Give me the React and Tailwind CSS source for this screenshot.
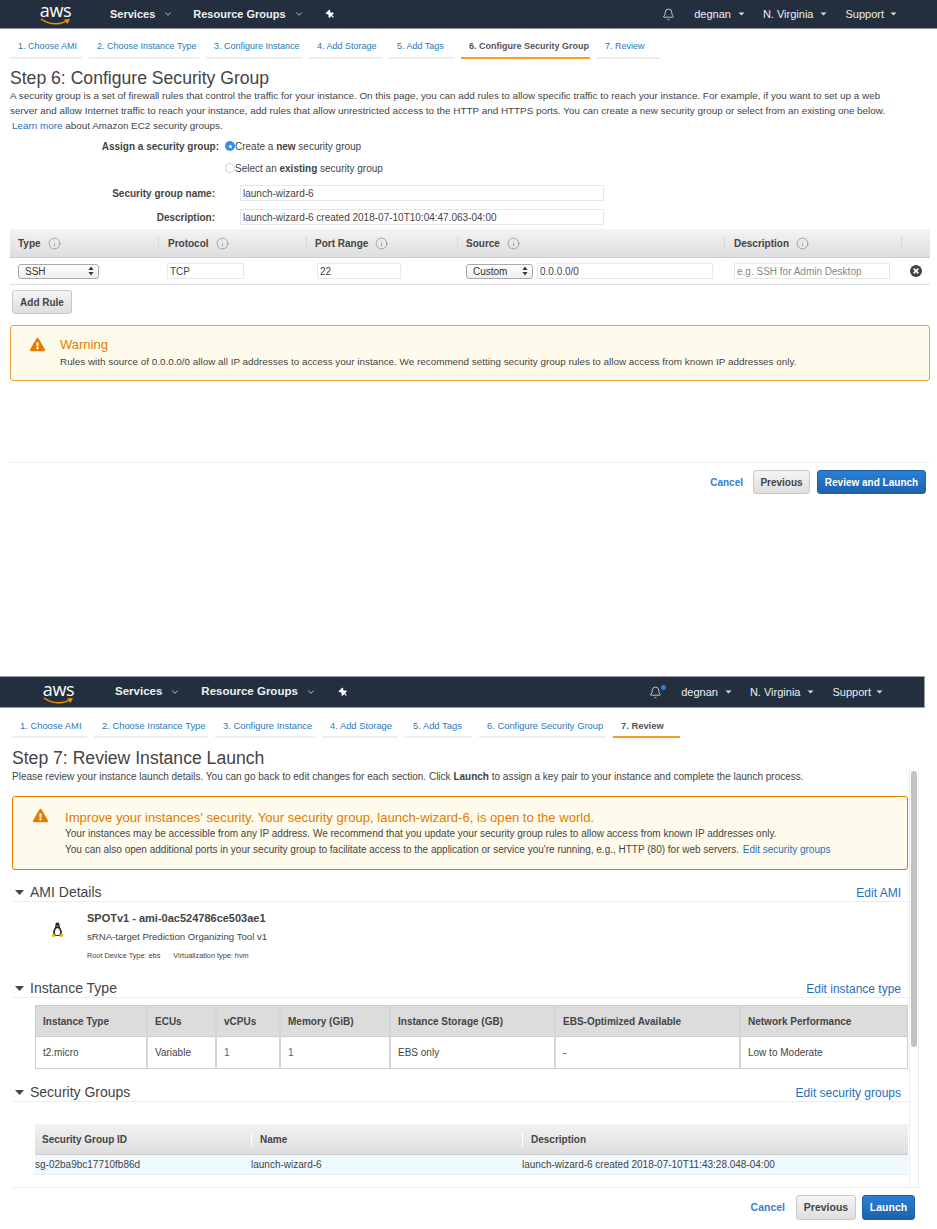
import { Bell, ChevronDown, Info } from 'lucide-react'
import { FaThumbtack, FaExclamationTriangle } from 'react-icons/fa'

function AwsLogo() {
  return (
    <div className="flex flex-col items-center w-[31px] h-[24px] shrink-0">
      <div className="text-white text-[18px] leading-[16px] font-['Open_Sans',sans-serif] tracking-[-0.3px]">aws</div>
      <svg width="31" height="8" viewBox="0 0 31 8">
        <path d="M1 1 C 9 7 21 7 27 2.5" fill="none" stroke="#f29100" strokeWidth="1.5" />
        <path d="M24 1.5 L30 1 L27.5 6 Z" fill="#f29100" />
      </svg>
    </div>
  )
}

function Caret() {
  return (
    <svg width="7" height="4" viewBox="0 0 7 4" className="shrink-0">
      <path d="M0.5 0.5 L3.5 3.5 L6.5 0.5 Z" fill="#d5dbdb" />
    </svg>
  )
}

function TopBar({ wide }) {
  return (
    <div className={wide
      ? "flex items-center h-[32px] w-[925px] bg-[#232f3e] border-y border-r border-[#9a9fa5] text-[#eceff1] text-[11px]"
      : "flex items-center h-[29px] w-[937px] bg-[#232f3e] border-b border-[#8a8f96] text-[#eceff1] text-[11px]"}>
      <div className={wide ? "ml-[43px] mt-[1px]" : "ml-[40px]"}><AwsLogo /></div>
      <span className={wide ? "ml-[41px] font-bold text-[11.5px]" : "ml-[39px] font-bold"}>Services</span>
      <ChevronDown size={10} className="ml-[8px] text-[#d5dbdb]" />
      <span className={wide ? "ml-[21px] font-bold text-[11.5px]" : "ml-[20px] font-bold"}>Resource Groups</span>
      <ChevronDown size={10} className="ml-[8px] text-[#d5dbdb]" />
      <FaThumbtack size={9} className={wide ? "ml-[23px] -rotate-45 text-white" : "ml-[22px] -rotate-45 text-white"} />
      <div className="flex-1" />
      <div className="relative">
        <Bell size={13} strokeWidth={1.3} className="text-white" />
        {wide && <div className="absolute -top-[1px] -right-[4px] w-[5px] h-[5px] rounded-full bg-[#2f7fdc]" />}
      </div>
      <span className={wide ? "ml-[19px]" : "ml-[19px]"}>degnan</span>
      <div className="ml-[7px]"><Caret /></div>
      <span className={wide ? "ml-[18px]" : "ml-[18px]"}>N. Virginia</span>
      <div className="ml-[7px]"><Caret /></div>
      <span className={wide ? "ml-[18px]" : "ml-[18px]"}>Support</span>
      <div className={wide ? "ml-[5px] mr-[41px]" : "ml-[6px] mr-[40px]"}><Caret /></div>
    </div>
  )
}

function Tabs({ items, big }) {
  return (
    <div className={big ? "flex gap-[7px] ml-[12px] mt-[8px] text-[9.4px]" : "flex gap-[7px] ml-[10px] mt-[8px] text-[9px]"}>
      {items.map((t) => (
        <div key={t.label} className={`${t.w} h-[22px] pl-[8px] flex items-center border-b-2 whitespace-nowrap ${t.active ? "border-[#f59b26] font-bold text-[#555]" : "border-[#eee] text-[#2a7ab8]"}`}>
          {t.label}
        </div>
      ))}
    </div>
  )
}

function HeadCell({ label, className }) {
  return (
    <div className={`flex items-center gap-[7px] h-[15px] font-bold text-[#444] ${className}`}>
      {label}
      <Info size={13} strokeWidth={1} className="text-[#666]" />
    </div>
  )
}

function FakeSelect({ label, className }) {
  return (
    <div className={`flex items-center justify-between h-[15px] pl-[6px] pr-[4px] border border-[#aaa] rounded-[3px] bg-gradient-to-b from-[#fff] to-[#eee] text-[#333] ${className}`}>
      {label}
      <svg width="6" height="10" viewBox="0 0 6 10">
        <path d="M3 0.5 L5.5 4 L0.5 4 Z M3 9.5 L5.5 6 L0.5 6 Z" fill="#333" />
      </svg>
    </div>
  )
}

function Field({ value, className }) {
  return <div className={`flex items-center h-[16px] px-[2px] border border-[#e8e8e8] text-[#444] whitespace-nowrap ${className}`}>{value}</div>
}

function Radio({ on }) {
  if (on) {
    return (
      <div className="flex items-center justify-center w-[10px] h-[10px] rounded-full bg-[#3b8ee8]">
        <div className="w-[3px] h-[3px] rounded-full bg-white" />
      </div>
    )
  }
  return <div className="w-[10px] h-[10px] rounded-full border border-[#ccc] bg-white" />
}

function Button({ label, primary, className }) {
  return (
    <div className={`flex items-center justify-center font-bold rounded-[3px] border ${primary
      ? "bg-gradient-to-b from-[#2b7fd4] to-[#1b62ae] border-[#1b62ae] text-white"
      : "bg-gradient-to-b from-[#f5f5f5] to-[#dedede] border-[#c8c8c8] text-[#444]"} ${className}`}>
      {label}
    </div>
  )
}

function CloseIcon() {
  return (
    <svg width="12" height="12" viewBox="0 0 12 12">
      <circle cx="6" cy="6" r="6" fill="#444" />
      <path d="M3.7 3.7 L8.3 8.3 M8.3 3.7 L3.7 8.3" stroke="#fff" strokeWidth="1.7" />
    </svg>
  )
}

function Penguin() {
  return (
    <svg width="13" height="16" viewBox="0 0 13 16">
      <path d="M6.5 0.5 C4.5 0.5 4.3 2.5 4.3 4.2 C4.3 5.6 2 8 2 11 C2 13 4 14 6.5 14 C9 14 11 13 11 11 C11 8 8.7 5.6 8.7 4.2 C8.7 2.5 8.5 0.5 6.5 0.5 Z" fill="#222" />
      <path d="M6.5 6 C5 6 3.8 8.5 3.8 10.7 C3.8 12.4 5 13 6.5 13 C8 13 9.2 12.4 9.2 10.7 C9.2 8.5 8 6 6.5 6 Z" fill="#fff" />
      <path d="M5.2 3.6 L7.8 3.6 L6.5 5 Z" fill="#eeb41e" />
      <path d="M0.5 13 L3 11 L4.5 14.5 L1.5 15 Z M12.5 13 L10 11 L8.5 14.5 L11.5 15 Z" fill="#eeb41e" />
    </svg>
  )
}

function SectionHead({ title, link }) {
  return (
    <div className="flex items-center h-[18px] border-b border-[#eee]">
      <svg width="9" height="5" viewBox="0 0 9 5" className="ml-[3px] shrink-0">
        <path d="M0 0 L9 0 L4.5 5 Z" fill="#444" />
      </svg>
      <span className="ml-[6px] text-[14px] text-[#444]">{title}</span>
      <div className="flex-1" />
      {link && <span className="mr-[8px] text-[12px] text-[#1f6fc0]">{link}</span>}
    </div>
  )
}

const tabsOne = [
  { label: '1. Choose AMI', w: 'w-[72px]' },
  { label: '2. Choose Instance Type', w: 'w-[110px]' },
  { label: '3. Configure Instance', w: 'w-[96px]' },
  { label: '4. Add Storage', w: 'w-[73px]' },
  { label: '5. Add Tags', w: 'w-[65px]' },
  { label: '6. Configure Security Group', w: 'w-[129px]', active: true },
  { label: '7. Review', w: 'w-[64px]' },
]

const tabsTwo = [
  { label: '1. Choose AMI', w: 'w-[75px]' },
  { label: '2. Choose Instance Type', w: 'w-[114px]' },
  { label: '3. Configure Instance', w: 'w-[100px]' },
  { label: '4. Add Storage', w: 'w-[76px]' },
  { label: '5. Add Tags', w: 'w-[67px]' },
  { label: '6. Configure Security Group', w: 'w-[127px]' },
  { label: '7. Review', w: 'w-[67px]', active: true },
]

const instanceCols = [
  { head: 'Instance Type', val: 't2.micro', w: 'w-[112px]' },
  { head: 'ECUs', val: 'Variable', w: 'w-[69px]' },
  { head: 'vCPUs', val: '1', w: 'w-[64px]', blue: true },
  { head: 'Memory (GiB)', val: '1', w: 'w-[110px]', blue: true },
  { head: 'Instance Storage (GB)', val: 'EBS only', w: 'w-[165px]' },
  { head: 'EBS-Optimized Available', val: '-', w: 'w-[185px]' },
  { head: 'Network Performance', val: 'Low to Moderate', w: 'flex-1' },
]

function ConfigureStep() {
  return (
    <div>
      <TopBar />
      <Tabs items={tabsOne} />
      <div className="pl-[10px] pr-[7px]">
        <h1 className="mt-[9px] h-[20px] leading-[20px] text-[17.6px] text-[#444]">Step 6: Configure Security Group</h1>
        <div className="text-[9.9px] leading-[15px] text-[#444] whitespace-nowrap">
          <div>A security group is a set of firewall rules that control the traffic for your instance. On this page, you can add rules to allow specific traffic to reach your instance. For example, if you want to set up a web</div>
          <div>server and allow Internet traffic to reach your instance, add rules that allow unrestricted access to the HTTP and HTTPS ports. You can create a new security group or select from an existing one below.</div>
          <div className="pl-[2px]"><span className="text-[#1f6fc0]">Learn more</span> about Amazon EC2 security groups.</div>
        </div>

        <div className="mt-[2px] text-[10px] text-[#444]">
          <div className="flex items-center h-[22px]">
            <div className="w-[209px] text-right font-bold">Assign a security group:</div>
            <div className="ml-[6px]"><Radio on /></div>
            <span>Create a <b>new</b> security group</span>
          </div>
          <div className="flex items-center h-[22px]">
            <div className="ml-[215px]"><Radio /></div>
            <span>Select an <b>existing</b> security group</span>
          </div>
          <div className="flex items-center mt-[6px]">
            <div className="w-[205px] text-right font-bold">Security group name:</div>
            <Field value="launch-wizard-6" className="ml-[25px] w-[364px]" />
          </div>
          <div className="flex items-center mt-[8px]">
            <div className="w-[205px] text-right font-bold">Description:</div>
            <Field value="launch-wizard-6 created 2018-07-10T10:04:47.063-04:00" className="ml-[25px] w-[364px]" />
          </div>
        </div>

        <div className="mt-[4px] text-[10px]">
          <div className="flex items-center h-[29px] bg-gradient-to-b from-[#f4f4f4] to-[#dedede] border-b border-[#ccc]">
            <HeadCell label="Type" className="w-[148px] pl-[8px]" />
            <HeadCell label="Protocol" className="w-[148px] pl-[9px] border-l border-[#d8d8d8]" />
            <HeadCell label="Port Range" className="w-[151px] pl-[8px] border-l border-[#d8d8d8]" />
            <HeadCell label="Source" className="w-[267px] pl-[8px] border-l border-[#d8d8d8]" />
            <HeadCell label="Description" className="w-[177px] pl-[9px] border-l border-[#d8d8d8]" />
            <div className="w-[1px] h-[15px] bg-[#d8d8d8]" />
          </div>
          <div className="flex items-center h-[27px] border-b border-[#ddd]">
            <FakeSelect label="SSH" className="ml-[8px] w-[81px]" />
            <Field value="TCP" className="ml-[68px] w-[77px]" />
            <Field value="22" className="ml-[73px] w-[84px]" />
            <FakeSelect label="Custom" className="ml-[65px] w-[67px]" />
            <Field value="0.0.0.0/0" className="ml-[4px] w-[176px]" />
            <Field value="e.g. SSH for Admin Desktop" className="ml-[21px] w-[156px] !text-[#888]" />
            <div className="ml-[20px]"><CloseIcon /></div>
          </div>
        </div>

        <Button label="Add Rule" className="mt-[5px] ml-[2px] w-[60px] h-[24px] text-[10px]" />

        <div className="flex mt-[11px] h-[56px] border border-[#ec9e3c] rounded-[3px] bg-[#fefbec]">
          <FaExclamationTriangle size={15} className="ml-[19px] mt-[11px] text-[#e27b00]" />
          <div className="ml-[15px] mt-[10px]">
            <div className="text-[13px] leading-[18px] text-[#e27b00]">Warning</div>
            <div className="text-[9.9px] leading-[15px] text-[#444]">Rules with source of 0.0.0.0/0 allow all IP addresses to access your instance. We recommend setting security group rules to allow access from known IP addresses only.</div>
          </div>
        </div>

        <div className="mt-[81px] border-t border-[#eee]" />
        <div className="flex items-center justify-end mt-[7px] text-[10px] pr-[4px]">
          <span className="font-bold text-[#2f7fd4]">Cancel</span>
          <Button label="Previous" className="ml-[10px] w-[57px] h-[24px]" />
          <Button label="Review and Launch" primary className="ml-[7px] w-[109px] h-[24px]" />
        </div>
      </div>
    </div>
  )
}

function ReviewStep() {
  return (
    <div className="mt-[182px]">
      <TopBar wide />
      <Tabs items={tabsTwo} big />
      <div className="pl-[12px]">
        <h1 className="mt-[10px] h-[20px] leading-[20px] text-[17.6px] text-[#444]">Step 7: Review Instance Launch</h1>

        <div className="flex w-[907px] h-[420px] border-b border-[#eee] overflow-hidden">
          <div className="w-[897px]">
            <div className="mt-[2px] h-[14px] leading-[14px] text-[10px] text-[#444]">
              Please review your instance launch details. You can go back to edit changes for each section. Click <b>Launch</b> to assign a key pair to your instance and complete the launch process.
            </div>

            <div className="flex mt-[12px] w-[896px] h-[74px] border border-[#e27b00] rounded-[3px] bg-[#fefbec]">
              <FaExclamationTriangle size={15} className="ml-[20px] mt-[11px] shrink-0 text-[#e27b00]" />
              <div className="ml-[17px] mt-[12px] text-[10px] leading-[16px] text-[#444] whitespace-nowrap">
                <div className="text-[13.1px] leading-[17px] text-[#e27b00]">Improve your instances' security. Your security group, launch-wizard-6, is open to the world.</div>
                <div>Your instances may be accessible from any IP address. We recommend that you update your security group rules to allow access from known IP addresses only.</div>
                <div>You can also open additional ports in your security group to facilitate access to the application or service you're running, e.g., HTTP (80) for web servers. <span className="ml-[1px] text-[#1f6fc0]">Edit security groups</span></div>
              </div>
            </div>

            <div className="mt-[14px]"><SectionHead title="AMI Details" link="Edit AMI" /></div>
            <div className="flex h-[52px] mt-[9px] text-[#444]">
              <div className="ml-[39px] mt-[11px]"><Penguin /></div>
              <div className="ml-[23px]">
                <div className="h-[14px] leading-[14px] text-[11px] font-bold">SPOTv1 - ami-0ac524786ce503ae1</div>
                <div className="mt-[5px] h-[14px] leading-[14px] text-[9.6px]">sRNA-target Prediction Organizing Tool v1</div>
                <div className="mt-[5px] h-[14px] leading-[14px] text-[7.3px]">Root Device Type: ebs <span className="ml-[11px]">Virtualization type: hvm</span></div>
              </div>
            </div>

            <div className="mt-[17px]"><SectionHead title="Instance Type" link="Edit instance type" /></div>
            <div className="flex ml-[23px] mt-[7px] w-[873px] border border-[#ccc] text-[10px]">
              {instanceCols.map((c) => (
                <div key={c.head} className={`${c.w} border-r-2 border-[#d5d5d5] last:border-r-0`}>
                  <div className="flex items-center h-[31px] pl-[7px] bg-[#dcdcdc] border-b border-[#ccc] font-bold text-[#444]">{c.head}</div>
                  <div className={`flex items-center h-[31px] pl-[7px] ${c.blue ? "text-[#1f6fc0]" : "text-[#444]"}`}>{c.val}</div>
                </div>
              ))}
            </div>

            <div className="mt-[15px]"><SectionHead title="Security Groups" link="Edit security groups" /></div>
            <div className="ml-[23px] mt-[22px] w-[873px] text-[10px] text-[#444]">
              <div className="flex items-center h-[31px] bg-gradient-to-b from-[#f2f2f2] to-[#dedede] border-b border-[#ccc] font-bold">
                <div className="w-[216px] pl-[7px]">Security Group ID</div>
                <div className="w-[271px] pl-[8px] border-l border-white">Name</div>
                <div className="pl-[8px] border-l border-white">Description</div>
              </div>
              <div className="flex items-center h-[20px] bg-[#eff8fd] border-b border-[#e3ecf1]">
                <div className="w-[216px]">sg-02ba9bc17710fb86d</div>
                <div className="w-[271px]">launch-wizard-6</div>
                <div>launch-wizard-6 created 2018-07-10T11:43:28.048-04:00</div>
              </div>
            </div>
          </div>

          <div className="w-[10px] border-x border-[#eee] pt-[3px] pl-[1px]">
            <div className="w-[6px] h-[276px] rounded-[3px] bg-[#c2c2c2]" />
          </div>
        </div>

        <div className="flex items-center justify-end mt-[7px] w-[903px] text-[10.5px]">
          <span className="font-bold text-[#3a7fd0]">Cancel</span>
          <Button label="Previous" className="ml-[11px] w-[60px] h-[25px]" />
          <Button label="Launch" primary className="ml-[6px] w-[53px] h-[25px]" />
        </div>
      </div>
    </div>
  )
}

export default function App() {
  return (
    <div className="w-[937px] min-h-[1229px] bg-white font-['Liberation_Sans',sans-serif]">
      <ConfigureStep />
      <ReviewStep />
    </div>
  )
}
